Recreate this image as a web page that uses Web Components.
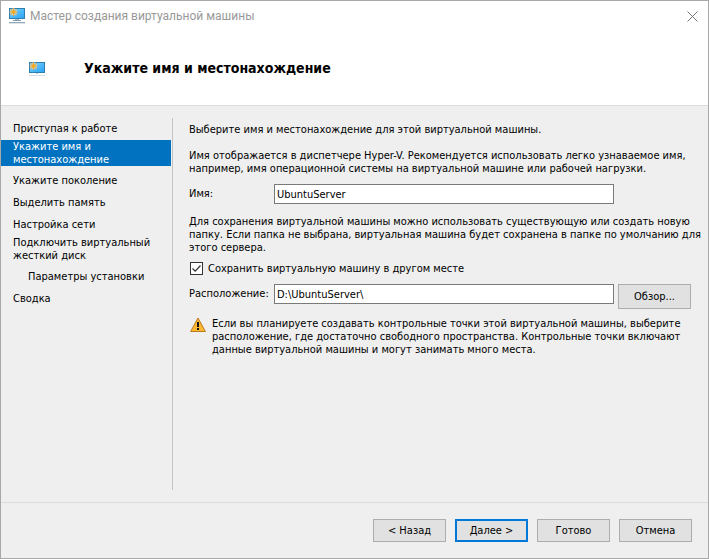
<!DOCTYPE html>
<html lang="ru">
<head>
<meta charset="utf-8">
<meta name="viewport" content="width=device-width, initial-scale=1">
<title>Мастер создания виртуальной машины</title>
<style>
  html, body { height: 100%; margin: 0; }
  body {
    --face: #efefef;
    --line: #dcdcdc;
    --accent: #0078d7;
    font: 11px/13px "DejaVu Sans Condensed", "Noto Sans", sans-serif;
    color: #000;
  }
</style>
</head>
<body>

<wizard-window>
  <span slot="caption">Мастер создания виртуальной машины</span>
  <span slot="title">Укажите имя и местонахождение</span>

  <wizard-step slot="steps">Приступая к работе</wizard-step>
  <wizard-step slot="steps" tall current>Укажите имя и местонахождение</wizard-step>
  <wizard-step slot="steps">Укажите поколение</wizard-step>
  <wizard-step slot="steps">Выделить память</wizard-step>
  <wizard-step slot="steps">Настройка сети</wizard-step>
  <wizard-step slot="steps" tall>Подключить виртуальный жесткий диск</wizard-step>
  <wizard-step slot="steps" nested>Параметры установки</wizard-step>
  <wizard-step slot="steps">Сводка</wizard-step>

  <wizard-form></wizard-form>

  <wizard-button slot="actions">&lt; Назад</wizard-button>
  <wizard-button slot="actions" primary>Далее &gt;</wizard-button>
  <wizard-button slot="actions">Готово</wizard-button>
  <wizard-button slot="actions">Отмена</wizard-button>
</wizard-window>

<script>
/** <vm-icon>: monitor with a "new" spark. Add `flat` for the version without a stand. */
class VmIcon extends HTMLElement {
  connectedCallback() {
    const flat = this.hasAttribute('flat');
    this.attachShadow({ mode: 'open' });
    this.shadowRoot.innerHTML = `
      <style>
        :host { display: block; flex: none; width: 16px; height: 16px; }
        svg { display: block; }
      </style>
      <svg width="16" height="16" viewBox="0 0 16 16" aria-hidden="true">
        <defs>
          <linearGradient id="screen" x1="0" y1="0" x2="1" y2="1">
            <stop offset="0" stop-color="#8fd8fb"/>
            <stop offset=".55" stop-color="#4bb8fb"/>
            <stop offset="1" stop-color="#2fa5f5"/>
          </linearGradient>
        </defs>
        ${flat ? `
          <rect x="0" y="2" width="16" height="11" fill="#2f7fae"/>
          <rect x="1" y="3" width="14" height="9" fill="url(#screen)"/>
          <rect x="7" y="13" width="2" height="1" fill="#b9c8d2"/>
          <rect x="0" y="15" width="16" height="1" fill="#d3dde4"/>
        ` : `
          <rect x="0" y="0" width="16" height="11" fill="#2f7fae"/>
          <rect x="1" y="1" width="14" height="9" fill="url(#screen)"/>
          <rect x="6" y="11" width="4" height="1" fill="#aec0cc"/>
          <rect x="4" y="12" width="8" height="1" fill="#7d9db0"/>
          <rect x="0" y="14" width="16" height="1" fill="#93a9b6"/>
          <rect x="0" y="15" width="16" height="1" fill="#dbe4ea"/>
        `}
        <g transform="translate(0 ${flat ? 2 : 0})">
          <circle cx="4.500" cy="4" r="3.600" fill="#b9d3d6"/>
          <path d="M4.500 0v8M.5 4h8M1.700 1.200l5.600 5.600M7.300 1.200L1.700 6.800" stroke="#eda42c"/>
          <circle cx="4.500" cy="4" r="1.500" fill="#ffa90f"/>
        </g>
      </svg>
    `;
  }
}

/** <wizard-step>: one line of the step list. Attributes: current, tall (two lines), nested. */
class WizardStep extends HTMLElement {
  connectedCallback() {
    this.attachShadow({ mode: 'open' });
    this.shadowRoot.innerHTML = `
      <style>
        :host { display: block; }
        a {
          display: block;
          padding: 5px 16px 4px 12px;
          line-height: 13px;
          color: inherit;
          text-decoration: none;
        }
        :host([tall]) a { margin: 1px 0 3px; padding-top: 0; padding-bottom: 0; }
        :host([nested]) a { padding-left: 27px; }
        :host([current]) a { background: #0072c0; color: #fff; }
      </style>
      <a href="#"><slot></slot></a>
    `;
    if (this.hasAttribute('current')) {
      this.shadowRoot.querySelector('a').setAttribute('aria-current', 'step');
    }
  }
}

/** <wizard-button>: push button, `primary` gives the default-button frame. */
class WizardButton extends HTMLElement {
  connectedCallback() {
    this.attachShadow({ mode: 'open' });
    this.shadowRoot.innerHTML = `
      <style>
        :host { display: block; }
        button {
          box-sizing: border-box;
          min-width: 73px;
          height: var(--button-height, 23px);
          padding: 0 8px;
          border: 1px solid #adadad;
          background: #e1e1e1;
          color: inherit;
          font: inherit;
          display: block;
        }
        :host([primary]) button { border: 2px solid var(--accent); }
        button:hover { background: #e5f1fb; }
      </style>
      <button type="button"><slot></slot></button>
    `;
  }
}

/** <wizard-field label="" value="">: labelled text box, default slot sits after the box. */
class WizardField extends HTMLElement {
  connectedCallback() {
    this.attachShadow({ mode: 'open' });
    this.shadowRoot.innerHTML = `
      <style>
        :host {
          display: grid;
          grid-template-columns: 85px 1fr 77px;
          align-items: start;
        }
        label { line-height: 20px; white-space: nowrap; }
        input {
          box-sizing: border-box;
          width: 100%;
          height: 20px;
          margin: 0;
          padding: 0 2px;
          border: 1px solid #7a7a7a;
          border-radius: 0;
          background: #fff;
          color: inherit;
          font: inherit;
          outline: none;
        }
        input:focus { border-color: var(--accent); }
        ::slotted(*) { margin-left: 4px; }
      </style>
      <label for="text"></label>
      <input id="text" type="text">
      <slot></slot>
    `;
    this.shadowRoot.querySelector('label').textContent = this.getAttribute('label');
    this.shadowRoot.querySelector('input').value = this.getAttribute('value');
  }
}

/** <wizard-check checked>: tick box with its caption in the slot. */
class WizardCheck extends HTMLElement {
  connectedCallback() {
    this.attachShadow({ mode: 'open' });
    this.shadowRoot.innerHTML = `
      <style>
        :host { display: block; }
        label { display: flex; align-items: center; gap: 5px; }
        .mark { display: grid; margin-left: 1px; }
        .mark > * { grid-area: 1 / 1; }
        input {
          appearance: none;
          box-sizing: border-box;
          width: 13px;
          height: 13px;
          margin: 0;
          border: 1px solid #333;
          background: #fff;
        }
        svg { visibility: hidden; pointer-events: none; }
        input:checked + svg { visibility: visible; }
      </style>
      <label>
        <span class="mark">
          <input type="checkbox">
          <svg width="13" height="13" viewBox="0 0 13 13" aria-hidden="true">
            <path d="M2.500 6.500l2.700 2.700 5.300-5.700" fill="none" stroke="#333" stroke-width="1.200"/>
          </svg>
        </span>
        <span><slot></slot></span>
      </label>
    `;
    this.shadowRoot.querySelector('input').checked = this.hasAttribute('checked');
  }
}

/** <wizard-warning>: note with a yellow warning triangle. */
class WizardWarning extends HTMLElement {
  connectedCallback() {
    this.attachShadow({ mode: 'open' });
    this.shadowRoot.innerHTML = `
      <style>
        :host { display: flex; gap: 6px; padding: 0 12px 0 1px; }
        svg { flex: none; }
      </style>
      <svg width="16" height="16" viewBox="0 0 16 16" aria-hidden="true">
        <path d="M8 1L15.400 14.500H.6z" fill="#fdb833" stroke="#b97a1e" stroke-linejoin="round"/>
        <path d="M7 5h2v5H7zM7 11h2v2H7z" fill="#111"/>
      </svg>
      <div><slot></slot></div>
    `;
  }
}

/** <wizard-form>: content of the "name and location" page. */
class WizardForm extends HTMLElement {
  connectedCallback() {
    this.attachShadow({ mode: 'open' });
    this.shadowRoot.innerHTML = `
      <style>
        :host { display: block; }
        p { margin: 0; }
        .intro { margin-bottom: 13px; }
        wizard-field { margin: 9px 12px 11px 0; }
        wizard-check { margin-top: 8px; }
        .location { margin-bottom: 8px; --button-height: 25px; }
      </style>
      <p class="intro">Выберите имя и местонахождение для этой виртуальной машины.</p>
      <p>Имя отображается в диспетчере Hyper-V. Рекомендуется использовать легко узнаваемое имя, например, имя операционной системы на виртуальной машине или рабочей нагрузки.</p>
      <wizard-field label="Имя:" value="UbuntuServer"></wizard-field>
      <p>Для сохранения виртуальной машины можно использовать существующую или создать новую папку. Если папка не выбрана, виртуальная машина будет сохранена в папке по умолчанию для этого сервера.</p>
      <wizard-check checked>Сохранить виртуальную машину в другом месте</wizard-check>
      <wizard-field class="location" label="Расположение:" value="D:\\UbuntuServer\\">
        <wizard-button>Обзор...</wizard-button>
      </wizard-field>
      <wizard-warning>Если вы планируете создавать контрольные точки этой виртуальной машины, выберите расположение, где достаточно свободного пространства. Контрольные точки включают данные виртуальной машины и могут занимать много места.</wizard-warning>
    `;
  }
}

/**
 * <wizard-window>
 *
 * Slots: caption, title, steps, actions and the default slot for the page.
 */
class WizardWindow extends HTMLElement {
  connectedCallback() {
    this.attachShadow({ mode: 'open' });
    this.shadowRoot.innerHTML = `
      <style>
        :host {
          display: flex;
          flex-direction: column;
          box-sizing: border-box;
          min-height: 100%;
          border: 1px solid #a8a8a8;
          background: var(--face);
        }
        header { background: #fff; border-bottom: 1px solid var(--line); }
        .caption {
          display: flex;
          align-items: center;
          gap: 5px;
          height: 30px;
          padding: 0 10px 0 8px;
          font: 12px/16px Roboto, sans-serif;
          color: #999;
        }
        .caption span { flex: 1; }
        .close { display: block; padding: 0; border: 0; background: none; }
        .close svg { display: block; }
        .banner {
          display: flex;
          align-items: center;
          gap: 39px;
          padding: 26px 28px;
        }
        h1 { margin: 0; font: bold 14px/22px "DejaVu Sans Condensed", "Noto Sans", sans-serif; }
        .body { flex: 1; display: flex; padding: 12px 5px 12px 0; }
        nav { flex: none; width: 171px; margin-top: -1px; }
        nav ::slotted(*) { margin-right: 1px; }
        main { flex: 1; min-width: 0; border-left: 1px solid #c4c4c4; padding: 5px 0 0 16px; }
        footer {
          display: flex;
          justify-content: flex-end;
          gap: 9px;
          padding: 16px;
          border-top: 1px solid var(--line);
        }
      </style>
      <header>
        <div class="caption">
          <vm-icon></vm-icon>
          <span><slot name="caption"></slot></span>
          <button class="close" type="button" aria-label="Закрыть">
            <svg width="11" height="11" viewBox="0 0 11 11" aria-hidden="true">
              <path d="M.5.500l10 10M10.500.500l-10 10" stroke="#777"/>
            </svg>
          </button>
        </div>
        <div class="banner">
          <vm-icon flat></vm-icon>
          <h1><slot name="title"></slot></h1>
        </div>
      </header>
      <div class="body">
        <nav><slot name="steps"></slot></nav>
        <main><slot></slot></main>
      </div>
      <footer><slot name="actions"></slot></footer>
    `;
  }
}

customElements.define('vm-icon', VmIcon);
customElements.define('wizard-step', WizardStep);
customElements.define('wizard-button', WizardButton);
customElements.define('wizard-field', WizardField);
customElements.define('wizard-check', WizardCheck);
customElements.define('wizard-warning', WizardWarning);
customElements.define('wizard-form', WizardForm);
customElements.define('wizard-window', WizardWindow);
</script>
</body>
</html>
